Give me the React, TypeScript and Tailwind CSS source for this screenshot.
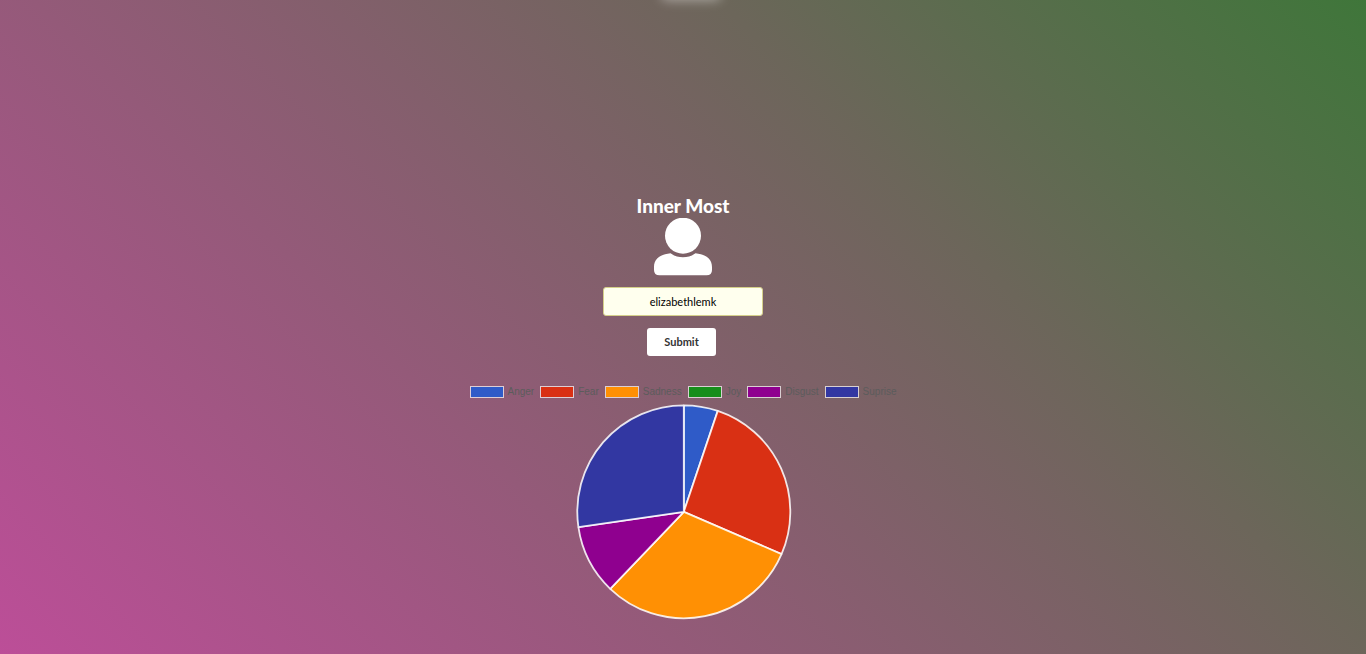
const emotions = [
  { label: "Anger", swatch: "bg-[#2f5bc8]", fill: "#2f5bc8", end: 18.6 },
  { label: "Fear", swatch: "bg-[#d93014]", fill: "#d93014", end: 113.4 },
  { label: "Sadness", swatch: "bg-[#ff9004]", fill: "#ff9004", end: 223.7 },
  { label: "Joy", swatch: "bg-[#168e1b]", fill: "#168e1b", end: 223.7 },
  { label: "Disgust", swatch: "bg-[#8f008f]", fill: "#8f008f", end: 261.7 },
  { label: "Suprise", swatch: "bg-[#3237a2]", fill: "#3237a2", end: 360 },
];

const CENTER = 107.8;
const RADIUS = 106.5;

function point(angle: number) {
  const rad = (angle * Math.PI) / 180;
  return `${(CENTER + RADIUS * Math.sin(rad)).toFixed(2)} ${(CENTER - RADIUS * Math.cos(rad)).toFixed(2)}`;
}

function PieChart() {
  return (
    <svg width="216" height="216" viewBox="0 0 216 216" role="img" aria-label="Emotions" className="ml-px block">
      {emotions.map((e, i) => {
        const start = i === 0 ? 0 : emotions[i - 1].end;
        if (start === e.end) return null;
        return (
          <path
            key={e.label}
            d={`M${CENTER} ${CENTER} L${point(start)} A${RADIUS} ${RADIUS} 0 0 1 ${point(e.end)} Z`}
            fill={e.fill}
            stroke="#fff"
            strokeOpacity="0.86"
            strokeWidth="1.8"
            strokeLinejoin="bevel"
          />
        );
      })}
    </svg>
  );
}

function UserIcon() {
  return (
    <svg width="58" height="58" viewBox="0 0 58 58" fill="#fff" aria-hidden="true" className="block">
      <circle cx="29" cy="17.700" r="18" />
      <path d="M16.500 35.300 Q22 39.300 29 39.300 Q36 39.300 41.500 35.300 C52 36.500 58 41 58 49 V52 Q58 57.300 52.500 57.300 H5.500 Q0 57.300 0 52 V49 C0 41 6 36.500 16.500 35.300 Z" />
    </svg>
  );
}

export default function App() {
  return (
    <main className="relative flex min-h-screen flex-col items-center overflow-hidden bg-linear-45/srgb from-[#bc4e98] via-[#6c665a] via-68% to-[#3f763a] pt-[194px] pb-8 font-['Lato',sans-serif]">
      <div className="absolute -top-3 left-1/2 ml-2 h-2 w-14 -translate-x-1/2 rounded-full shadow-[0_2px_12px_2px_rgba(255,255,255,0.45)]" />
      <h1 className="text-[19px] leading-6 font-black text-white">Inner Most</h1>
      <UserIcon />
      <form className="mt-[11px] flex flex-col items-center gap-3" onSubmit={(e) => e.preventDefault()}>
        <input
          type="text"
          aria-label="Username"
          defaultValue="elizabethlemk"
          className="h-[29px] w-40 rounded-[3px] border border-[#d5d08a] bg-[#ffffee] px-3 text-center text-[11px] text-black outline-none"
        />
        <button type="submit" className="mr-[3px] h-7 w-[69px] rounded-[3px] bg-white text-[11px] font-bold text-[#333]">
          Submit
        </button>
      </form>
      <section className="mt-[30px] flex flex-col items-center gap-1.5">
        <ul className="flex gap-1.5 font-['Liberation_Sans',Arial,sans-serif] text-[10px] leading-3 text-[#5c5c5c]">
          {emotions.map((e) => (
            <li key={e.label} className="flex items-center gap-1">
              <span className={`h-3 w-[34px] border border-white/70 bg-clip-padding ${e.swatch}`} />
              {e.label}
            </li>
          ))}
        </ul>
        <PieChart />
      </section>
    </main>
  );
}
